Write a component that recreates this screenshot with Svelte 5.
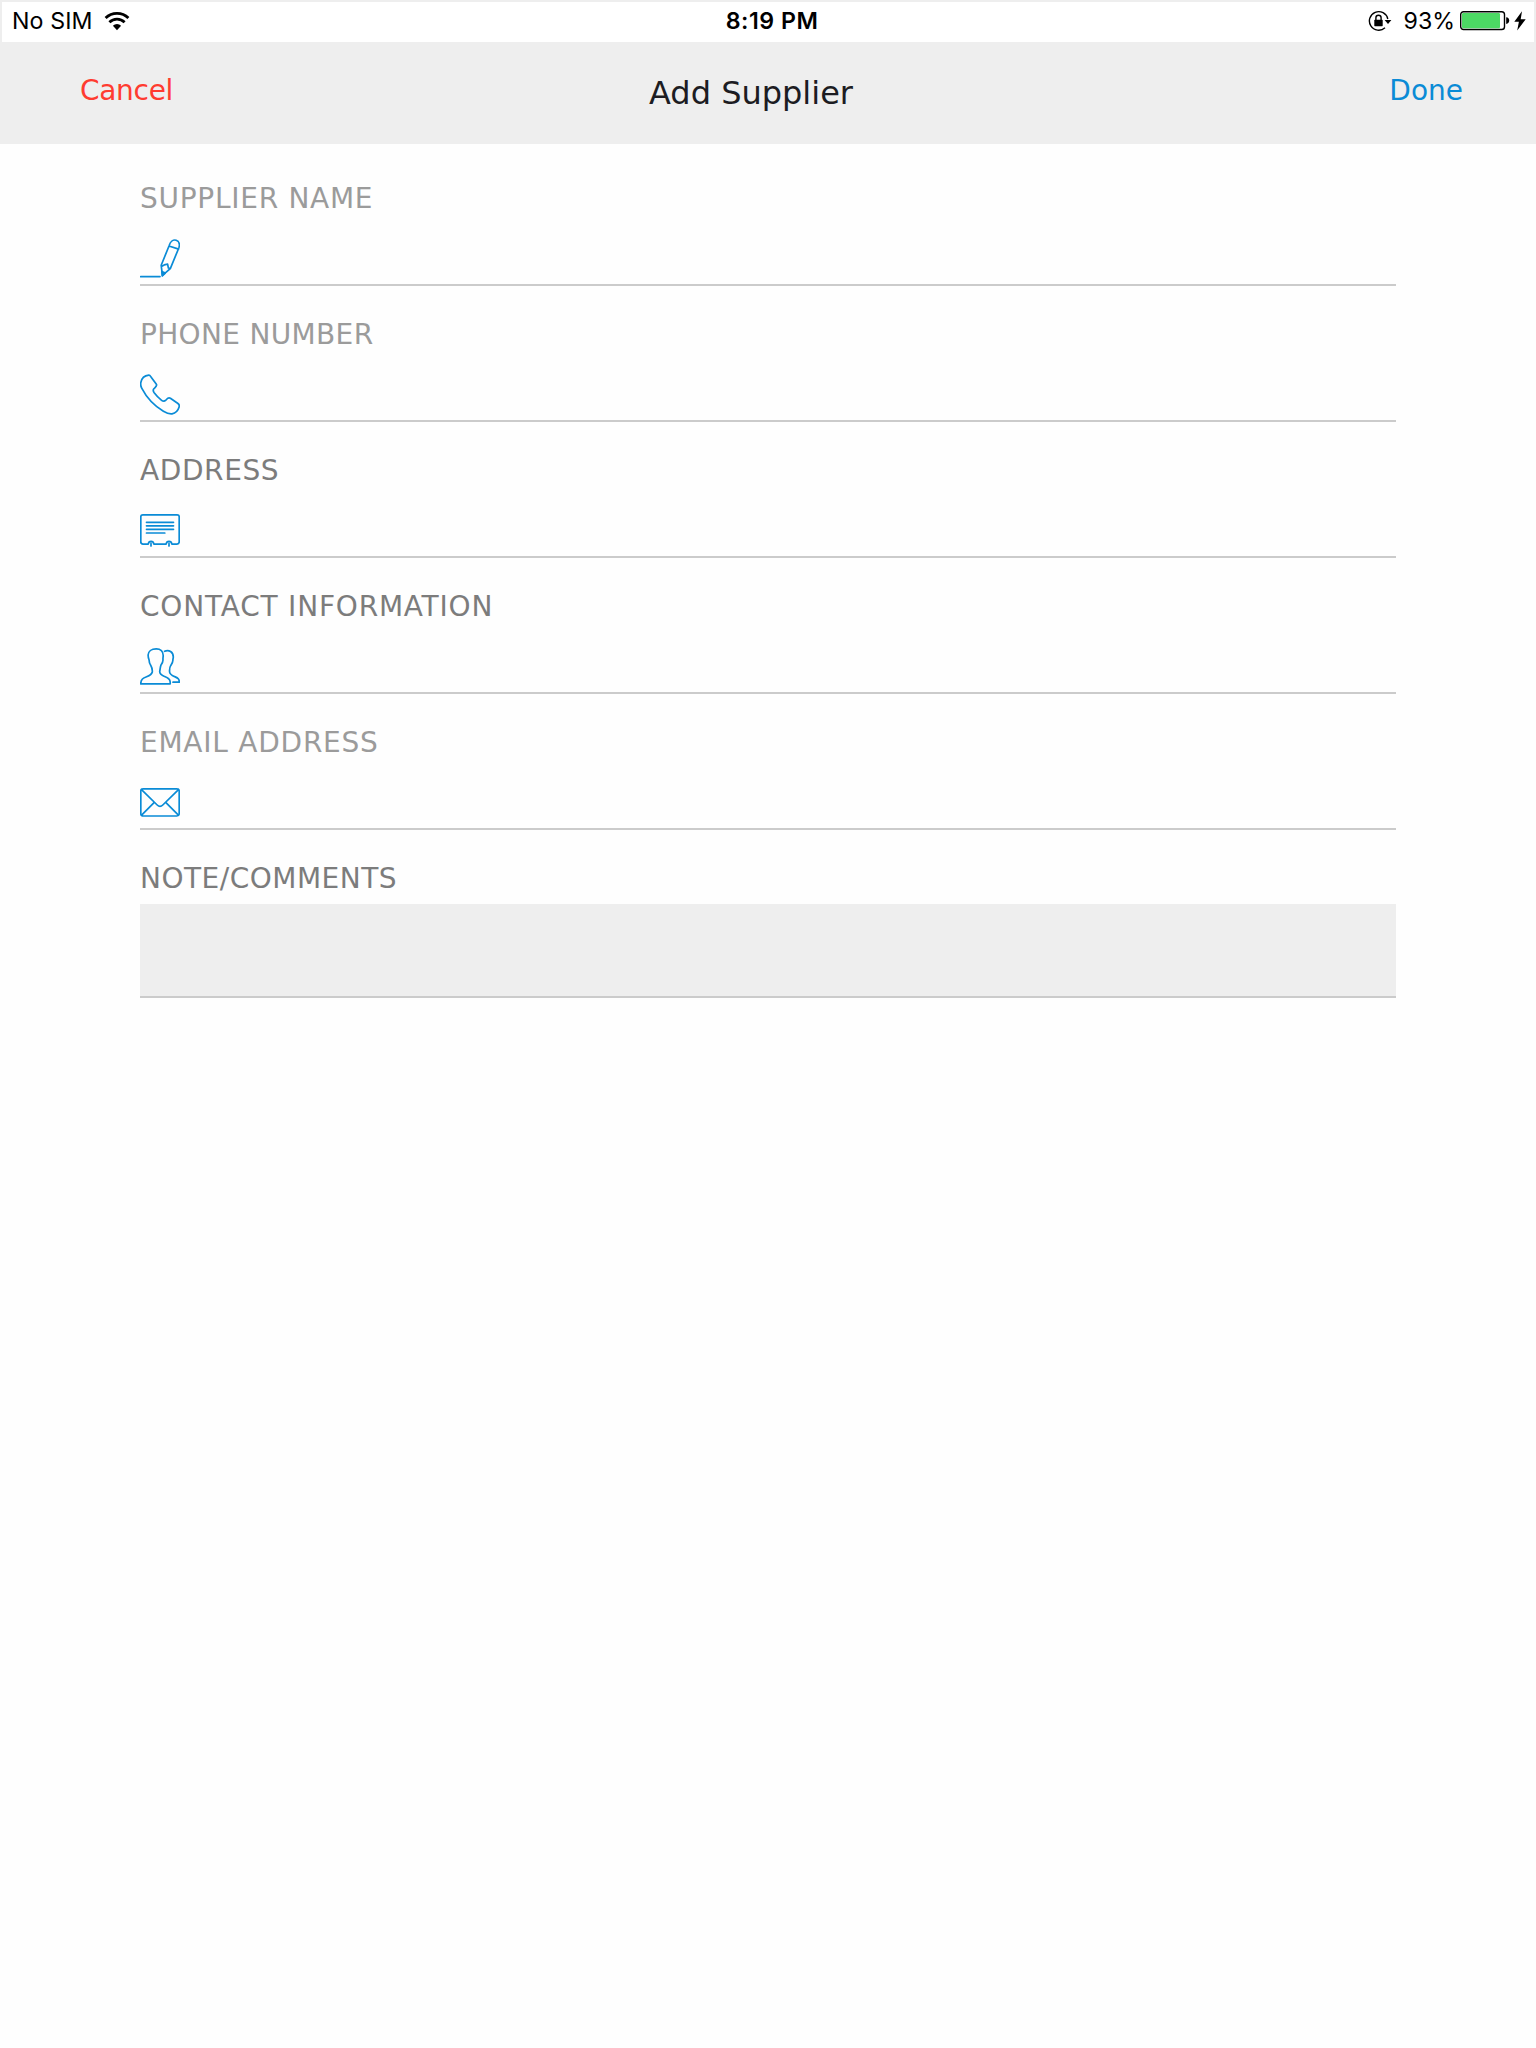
<script>
  const fields = [
    { id: 'name', label: 'SUPPLIER NAME', icon: 'pencil', muted: true },
    { id: 'phone', label: 'PHONE NUMBER', icon: 'phone', muted: true },
    { id: 'address', label: 'ADDRESS', icon: 'card', muted: false },
    { id: 'contact', label: 'CONTACT INFORMATION', icon: 'people', muted: false },
    { id: 'email', label: 'EMAIL ADDRESS', icon: 'mail', muted: true }
  ];
</script>

<div class="screen">
  <div class="status">
    <div class="left">
      <span class="carrier">No SIM</span>
      <svg class="wifi" viewBox="0 0 26 20" width="26" height="20">
        <path d="M1.6 7.1 A16.2 16.2 0 0 1 24.4 7.1" />
        <path d="M5.4 11.2 A10.8 10.8 0 0 1 20.6 11.2" />
        <path class="solid" d="M13 19.2 L8.9 14.8 A5.8 5.8 0 0 1 17.1 14.8 Z" />
      </svg>
    </div>
    <span class="time">8:19 PM</span>
    <div class="right">
      <svg class="lock" viewBox="0 0 24 22" width="24" height="22">
        <path d="M19.8 9 A9.3 9.3 0 1 0 17 17.8" />
        <path class="solid" d="M16.6 10 H23.4 L20 14 Z" />
        <rect class="solid" x="6.3" y="9.8" width="8.4" height="6.4" rx=".6" />
        <path d="M7.9 10 V7.8 A2.6 2.6 0 0 1 13.1 7.8 V10" />
      </svg>
      <span class="percent">93%</span>
      <svg class="battery" viewBox="0 0 50 20" width="50" height="20">
        <rect class="shell" x=".7" y=".7" width="43.8" height="17.8" rx="2.8" />
        <rect class="charge" x="2" y="2" width="38" height="15.2" rx="1.2" />
        <path class="solid" d="M46.2 6.2 Q49.2 6.6 49.2 9.6 T46.2 13 Z" />
      </svg>
      <svg class="bolt" viewBox="0 0 12 20" width="12" height="20">
        <path class="solid" d="M8 .2 L.3 10.8 H4.9 L3.2 19.6 L11.7 8.2 H6.7 Z" />
      </svg>
    </div>
  </div>

  <header>
    <button class="cancel">Cancel</button>
    <h1>Add Supplier</h1>
    <button class="done">Done</button>
  </header>

  <form>
    {#each fields as field (field.id)}
      <div class="field">
        <label class={[field.id, field.muted && 'muted']} for={field.id}>{field.label}</label>
        <div class="entry">
          <svg class="icon" viewBox="0 0 40 42" width="40" height="42">
            {#if field.icon === 'pencil'}
              <path d="M29.3 7.2 C30.3 3.7 33 1.3 36.2 2.2 C39.4 3.2 39.9 6.5 38.9 9.7 L30.3 30.6 L22.4 37.3 L21.2 27.3 Z M29 8 L38.6 11.1 M21.4 28.4 L24.2 26.9 L27.6 26.2 L28.4 30 L30.3 30.6" />
              <path class="fill" d="M21.9 33.4 L25.2 35.1 L22.3 38 Z" />
              <path d="M.7 38.6 H20" />
            {:else if field.icon === 'phone'}
              <path d="M8.8 1.2 C9.9 1.1 10.5 2.2 11 2.9 L16.2 9.9 C17.6 11.9 15.9 12.7 14.2 14.3 C12.6 15.7 13 17 14.2 18.7 C16.5 21.8 19 24.3 21.6 26.3 C23 27.5 24.5 27.5 25.8 26.2 C27.2 24.7 28.2 22.8 30.4 24.3 L37.6 29.2 C39.3 30.4 39.6 31.6 39.1 33 C38 36.8 35.4 39.2 32 39.8 C29.5 40.2 26.7 39.1 23.4 37.2 C14.2 31.7 6.4 23.2 1.7 14.1 C.7 12.2 .5 10.4 .8 8.7 C1.5 4.8 4.3 1.6 8.8 1.2 Z" />
            {:else if field.icon === 'card'}
              <path d="M8.2 34.1 H3 Q.8 34.1 .8 31.8 V6.8 Q.8 4.8 2.8 4.8 H37.2 Q39.2 4.8 39.2 6.8 V31.8 Q39.2 34.1 37 34.1 H31.9 C31.3 30.4 26.7 30.4 26.1 34.1 H13.9 C13.3 30.4 8.8 30.4 8.2 34.1 M11 33.4 V36 M29 33.4 V36" />
              <path d="M6.5 12.3 H33.5 M6.5 15.8 H33.5 M6.5 19.3 H33.5 M6.5 23 H24.8" />
            {:else if field.icon === 'people'}
              <path d="M16.3 2.8 C20.6 2.8 23.2 5.5 23.2 9.4 C23.2 11.2 22.8 12.3 23 13.8 C23.1 15.6 22 17.6 21 19 C20.1 21.3 20.2 23.2 19.7 25.4 C19.6 28.3 21.9 29.5 24.5 30.5 C27.7 31.8 30.1 32.7 30.2 36 V37.8 H.8 C.7 33.2 3.3 32 6.6 30.7 C9.5 29.6 11.8 28.3 12.3 26 C12.5 23.4 12.2 21.8 10.8 19.5 C9.7 17.8 9 16.5 9.1 14 C8.4 12.4 8.1 10.8 8.1 9 C8.2 5.4 11.4 2.8 16.3 2.8 Z" />
              <path d="M24.6 5.3 C28.9 3.6 33.3 5.9 33.3 11 C33.3 12.2 32.8 13 32.9 14.2 C32.9 16 32.1 17.5 30.8 19.4 C29.5 21.4 29.4 23.6 29.6 26 C29.8 28.5 32 29.5 34.6 30.6 C37.6 32 39.3 32.5 39.3 36.2 H33" />
            {:else}
              <rect x=".8" y="6.8" width="38.4" height="27.2" rx="2.4" />
              <path d="M1.5 7.6 L17.2 23 Q20 25.8 22.8 23 L38.5 7.6 M1.6 33.1 L14.3 20.3 M38.4 33.1 L25.7 20.3" />
            {/if}
          </svg>
          <input id={field.id} />
        </div>
      </div>
    {/each}
    <div class="field">
      <label class="note" for="note">NOTE/COMMENTS</label>
      <textarea id="note"></textarea>
    </div>
  </form>
</div>

<style>
  :global(body) {
    margin: 0;
    background: #fff;
  }
  .screen {
    width: 1536px;
    height: 2048px;
    background: #fefefe;
    font-family: Verdana, 'DejaVu Sans', sans-serif;
  }
  .status {
    box-sizing: border-box;
    height: 42px;
    display: grid;
    grid-template-columns: 1fr auto 1fr;
    align-items: start;
    padding: 0 8px 0 10px;
    border: solid #eee;
    border-width: 2px 2px 0;
    background: #fff;
    color: #000;
    font: 23.2px/38px Inter, sans-serif;
  }
  .left,
  .right {
    display: flex;
    align-items: center;
    height: 38px;
  }
  .right {
    justify-content: flex-end;
  }
  .carrier {
    letter-spacing: 0.1px;
  }
  .wifi {
    margin-left: 11px;
  }
  .time {
    font-weight: 600;
    letter-spacing: 0.5px;
    margin-left: 6px;
  }
  .lock {
    margin-right: 12px;
  }
  .percent {
    margin-right: 5px;
  }
  .bolt {
    margin-left: 4px;
  }
  .status svg {
    fill: none;
    stroke: #000;
    stroke-width: 1.4;
  }
  .status .wifi {
    stroke-width: 2.8;
  }
  .status .solid {
    fill: #000;
    stroke: none;
  }
  .status .charge {
    fill: #4cd964;
    stroke: none;
  }
  header {
    box-sizing: border-box;
    height: 102px;
    display: grid;
    grid-template-columns: 569px 1fr auto;
    align-items: start;
    padding: 31px 73px 0 80px;
    background: #eee;
  }
  button {
    border: 0;
    padding: 0;
    height: 36px;
    background: none;
    font: 28px/36px Verdana, 'DejaVu Sans', sans-serif;
  }
  .cancel {
    justify-self: start;
    color: #ff3b30;
    letter-spacing: -0.3px;
  }
  .done {
    color: #0a8bd6;
  }
  h1 {
    margin: 0;
    color: #1c1c22;
    font-weight: 400;
    font-size: 32px;
    line-height: 40px;
  }
  form {
    width: 1256px;
    margin: 0 auto;
    padding-top: 36px;
  }
  .field {
    display: flex;
    flex-direction: column;
    height: 136px;
  }
  label {
    box-sizing: border-box;
    flex: none;
    height: 36px;
    padding-top: 1px;
    color: #7c7c7c;
    font-size: 28px;
    line-height: 36px;
    white-space: nowrap;
  }
  .muted {
    color: #9b9b9b;
  }
  .name {
    letter-spacing: 0.72px;
  }
  .phone {
    letter-spacing: 0.33px;
  }
  .address {
    letter-spacing: 0.6px;
  }
  .contact {
    letter-spacing: 0.8px;
  }
  .email {
    letter-spacing: 0.76px;
  }
  .note {
    letter-spacing: 0.5px;
  }
  .entry {
    box-sizing: border-box;
    height: 70px;
    display: flex;
    align-items: flex-end;
    gap: 16px;
    padding-bottom: 4px;
    border-bottom: 2px solid #cbcbcb;
  }
  .icon {
    fill: none;
    stroke: #0a8bd6;
    stroke-width: 1.7;
    stroke-linejoin: round;
    stroke-linecap: round;
  }
  .icon .fill {
    fill: #0a8bd6;
  }
  input {
    flex: 1;
    height: 40px;
    padding: 0;
    border: 0;
    outline: 0;
    background: none;
    font: inherit;
  }
  textarea {
    box-sizing: border-box;
    flex: none;
    width: 100%;
    height: 94px;
    margin-top: 8px;
    padding: 8px;
    border: 0;
    border-bottom: 2px solid #cbcbcb;
    border-radius: 0;
    background: #eee;
    resize: none;
    font: inherit;
  }
</style>
